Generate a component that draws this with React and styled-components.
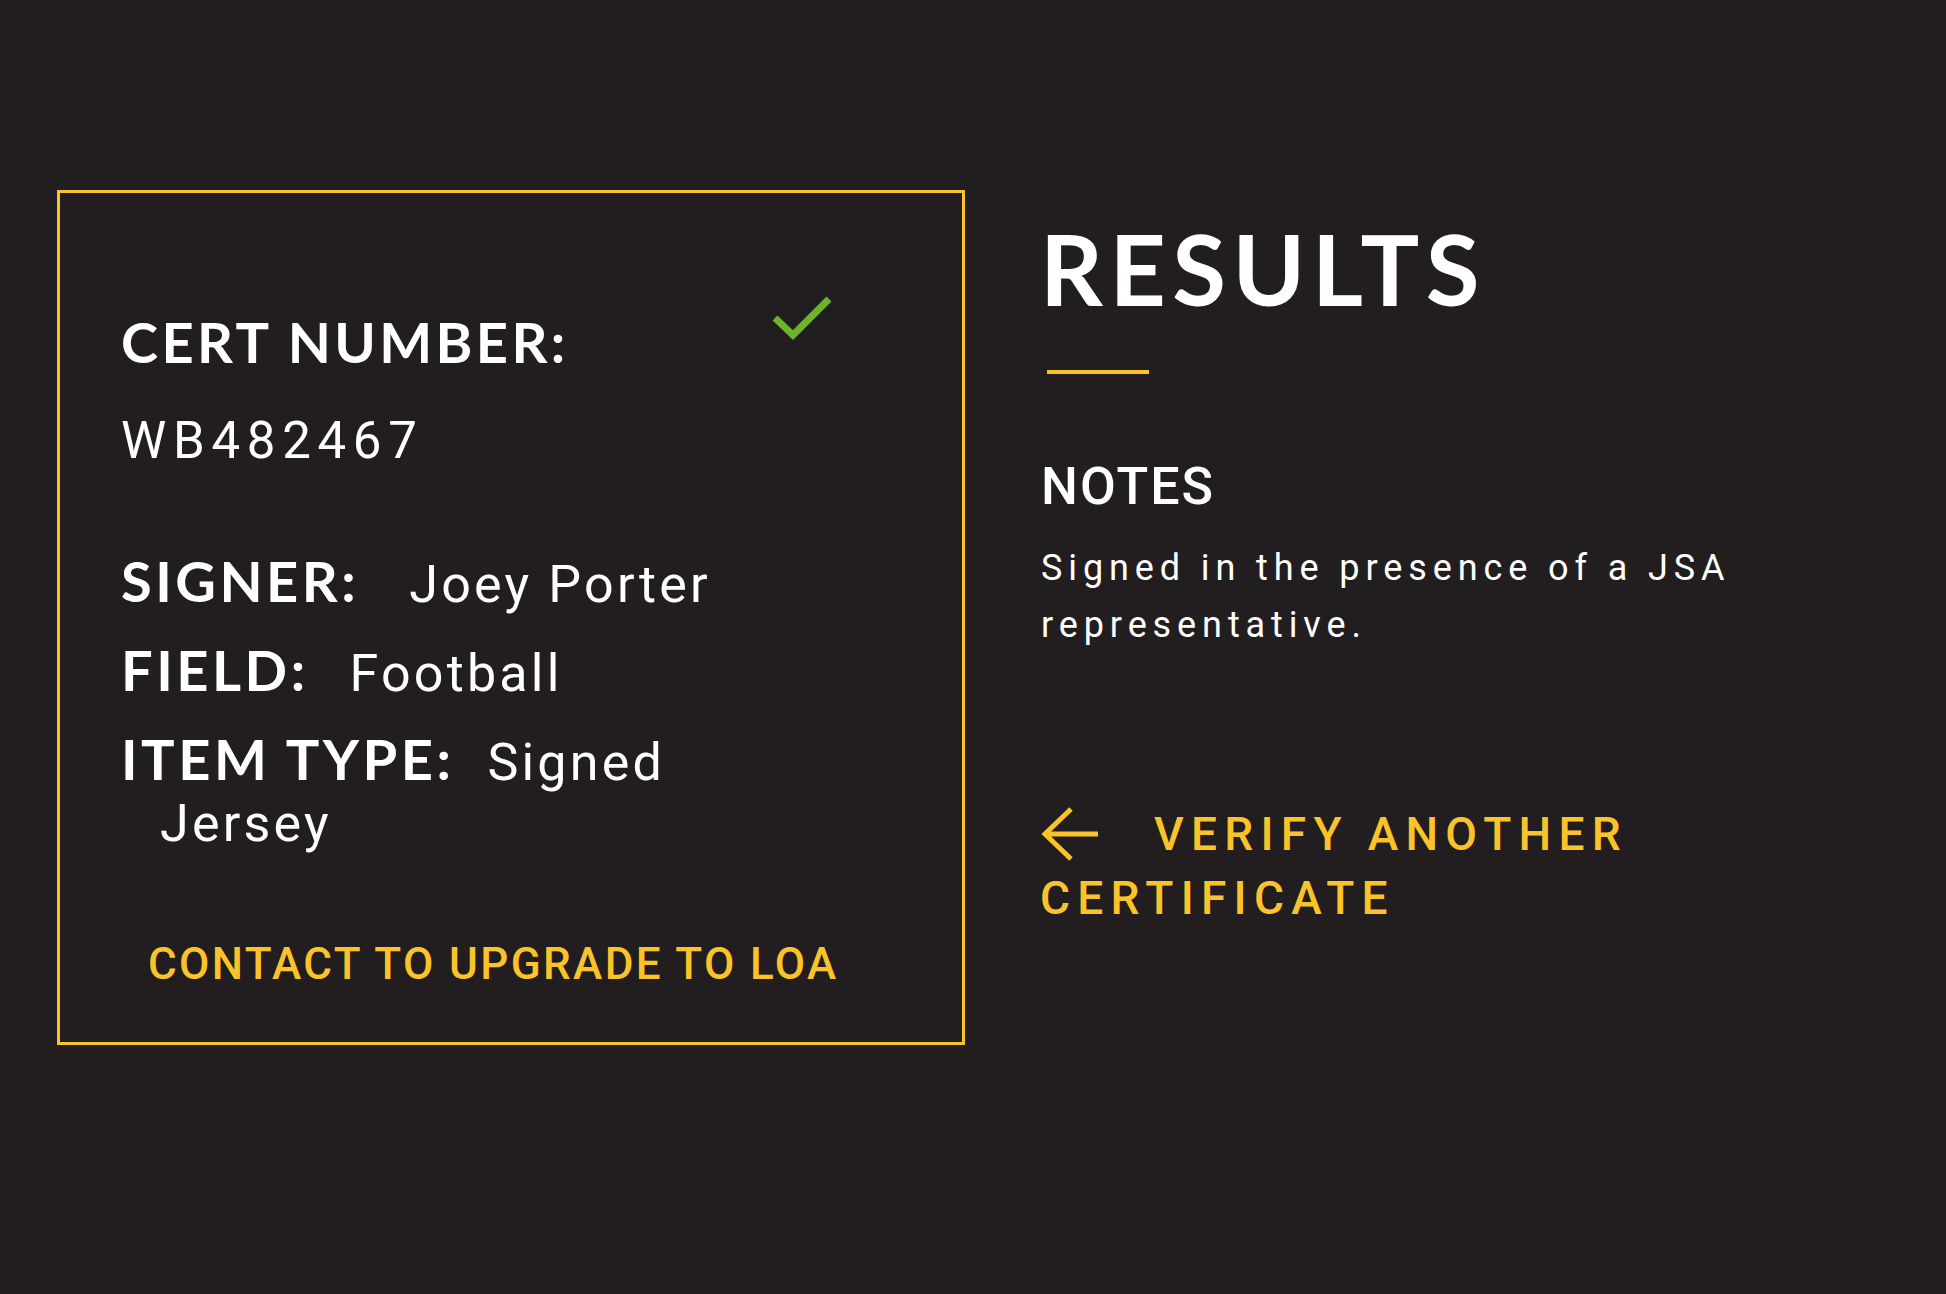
import React from "react";
import styled, { createGlobalStyle } from "styled-components";

const YELLOW = "#fbc32a";
const BG = "#221e1f";

const GlobalStyle = createGlobalStyle`
  html, body {
    margin: 0;
    padding: 0;
    background: ${BG};
  }
  body {
    font-family: Roboto, "Liberation Sans", sans-serif;
    color: #fff;
  }
`;

const Page = styled.div`
  display: flex;
  align-items: flex-start;
  gap: 78px;
  min-height: 1294px;
  box-sizing: border-box;
  padding: 190px 0 0 57px;
  background: ${BG};
`;

const Card = styled.section`
  width: 908px;
  height: 855px;
  box-sizing: border-box;
  border: 3px solid ${YELLOW};
  padding: 115px 63px 0 61px;
`;

const CardHeader = styled.div`
  display: flex;
  justify-content: space-between;
  align-items: flex-start;
`;

const CardTitle = styled.h2`
  margin: 0;
  font-family: Lato, "Open Sans", sans-serif;
  font-weight: 700;
  font-size: 56px;
  line-height: 1.2;
  letter-spacing: 3.4px;
  color: #fff;
`;

const Check = styled.svg`
  margin: -18px 61px 0 0;
  flex: none;
`;

const CertNumber = styled.div`
  margin-top: 35px;
  font-size: 51px;
  line-height: 1.2;
  letter-spacing: 6.7px;
  font-weight: 400;
`;

const Details = styled.div`
  margin-top: 82px;
  max-width: 620px;
`;

const Row = styled.div`
  font-size: 52px;
  line-height: 61px;
  letter-spacing: 3.2px;
  padding-left: 39px;
  text-indent: -39px;
  & + & {
    margin-top: 27px;
  }
`;

const Label = styled.span`
  font-family: Lato, "Open Sans", sans-serif;
  font-weight: 700;
  font-size: 56px;
  line-height: 1;
  letter-spacing: 3.5px;
  margin-right: ${p => p.$gap}px;
`;

const Contact = styled.a`
  display: block;
  margin-top: 84px;
  padding-left: 27px;
  font-size: 44px;
  font-weight: 500;
  line-height: 1.2;
  letter-spacing: 2.4px;
  color: ${YELLOW};
  text-decoration: none;
`;

const Side = styled.div`
  width: 720px;
  padding-top: 29px;
`;

const Title = styled.h1`
  margin: 0 0 0 -3px;
  font-family: Lato, "Open Sans", sans-serif;
  font-weight: 700;
  font-size: 98px;
  line-height: 1;
  letter-spacing: 6.5px;
`;

const Rule = styled.div`
  width: 102px;
  height: 4px;
  margin: 53px 0 0 4px;
  background: ${YELLOW};
`;

const NotesTitle = styled.h3`
  margin: 82px 0 0 -2px;
  font-size: 52px;
  font-weight: 500;
  line-height: 1.2;
  letter-spacing: 2px;
`;

const NotesText = styled.p`
  margin: 22px 0 0 -2px;
  font-size: 36px;
  line-height: 57px;
  letter-spacing: 5.9px;
`;

const Verify = styled.a`
  display: block;
  margin: 148px 0 0 -3px;
  font-size: 46px;
  font-weight: 500;
  line-height: 64px;
  letter-spacing: 7.3px;
  color: ${YELLOW};
  text-decoration: none;
`;

const Arrow = styled.svg`
  vertical-align: -12px;
  margin: 0 56px 0 0;
`;

const details = [
  { label: "SIGNER:", value: "Joey Porter", gap: 50 },
  { label: "FIELD:", value: "Football", gap: 41 },
  { label: "ITEM TYPE:", value: "Signed Jersey", gap: 33 },
];

const App = () => {
  return <Page>
    <GlobalStyle/>
    <Card>
      <CardHeader>
        <CardTitle>CERT NUMBER:</CardTitle>
        <Check width="70" height="56" viewBox="0 0 70 56">
          <path d="M7 28 L25 45 L61 9" fill="none" stroke="#6cb42c" strokeWidth="7"/>
        </Check>
      </CardHeader>
      <CertNumber>WB482467</CertNumber>
      <Details>
        {details.map(d => (
          <Row key={d.label}>
            <Label $gap={d.gap}>{d.label}</Label>{d.value}
          </Row>
        ))}
      </Details>
      <Contact href="#">CONTACT TO UPGRADE TO LOA</Contact>
    </Card>
    <Side>
      <Title>RESULTS</Title>
      <Rule/>
      <NotesTitle>NOTES</NotesTitle>
      <NotesText>Signed in the presence of a JSA representative.</NotesText>
      <Verify href="#">
        <Arrow width="58" height="56" viewBox="0 0 58 56">
          <path d="M31 3 L5 28 L31 53 M5 28 L58 28" fill="none" stroke={YELLOW} strokeWidth="5"/>
        </Arrow>
        VERIFY ANOTHER CERTIFICATE
      </Verify>
    </Side>
  </Page>
};

export default App;
